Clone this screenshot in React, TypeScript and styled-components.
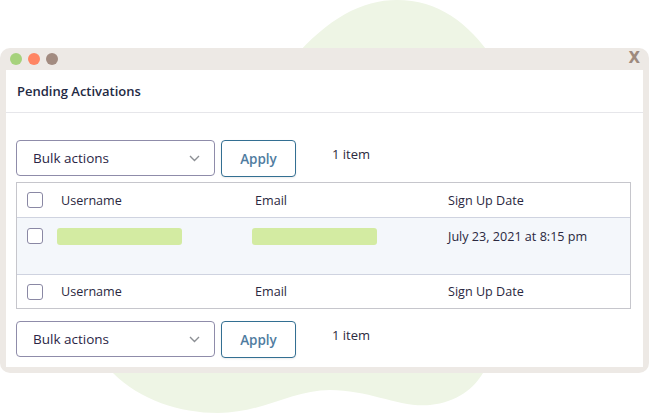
import React from "react";
import styled, { createGlobalStyle } from "styled-components";

const Global = createGlobalStyle`
  html, body { margin: 0; padding: 0; background: #ffffff; }
  body { font-family: "Open Sans", "Noto Sans", sans-serif; color: #2c3338; }
  * { box-sizing: border-box; }
`;

const Stage = styled.div`
  position: relative;
  width: 649px;
  height: 415px;
  overflow: hidden;
  padding-top: 48px;
`;

const Blob = styled.svg`
  position: absolute;
  left: 0;
  top: 0;
  z-index: 0;
`;

const Window = styled.div`
  position: relative;
  z-index: 1;
  width: 649px;
  background: #ede9e5;
  border-radius: 10px;
  padding: 0 6px 6px;
  display: flex;
  flex-direction: column;
`;

const TitleBar = styled.div`
  height: 22px;
  display: flex;
  align-items: center;
  gap: 6px;
  padding-left: 4px;
`;

const Dot = styled.span<{ $c: string }>`
  width: 12px;
  height: 12px;
  border-radius: 50%;
  background: ${(p) => p.$c};
`;

const Close = styled.span`
  margin-left: auto;
  margin-right: 3px;
  font-family: "DejaVu Sans", sans-serif;
  font-weight: 700;
  font-size: 15px;
  line-height: 1;
  color: #9e8a7e;
  padding-bottom: 1px;
`;

const Panel = styled.div`
  background: #ffffff;
  height: 297px;
  display: flex;
  flex-direction: column;
`;

const PanelHeader = styled.div`
  height: 43px;
  border-bottom: 1px solid #e6e6ea;
  display: flex;
  align-items: center;
  padding-left: 11px;
  font-size: 13px;
  font-weight: 600;
  color: #1f2a44;
`;

const Body = styled.div`
  padding: 27px 11px 0 10px;
  display: flex;
  flex-direction: column;
`;

const Toolbar = styled.div<{ $mt: number }>`
  display: flex;
  align-items: flex-start;
  gap: 6px;
  margin-top: ${(p) => p.$mt}px;
`;

const Select = styled.div`
  width: 199px;
  height: 36px;
  border: 1px solid #8f8caa;
  border-radius: 4px;
  display: flex;
  align-items: center;
  padding: 0 14px 0 16px;
  font-size: 13.5px;
  color: #2a2546;
`;

const Chevron = styled.svg`
  margin-left: auto;
`;

const ApplyButton = styled.button`
  width: 75px;
  height: 37px;
  border: 1px solid #336f92;
  border-radius: 4px;
  background: #ffffff;
  font-family: "Open Sans", "Noto Sans", sans-serif;
  font-weight: 600;
  font-size: 13.5px;
  color: #4f7ca0;
  box-shadow: 0 1px 2px rgba(0, 0, 0, 0.08);
  padding: 1px 0 0;
`;

const Count = styled.span`
  margin-left: 30px;
  margin-top: 5px;
  font-size: 13px;
  color: #2c2a40;
`;

const Table = styled.div`
  margin-top: 5px;
  width: 615px;
  border: 1px solid #c6c6cc;
  display: flex;
  flex-direction: column;
`;

const Row = styled.div<{ $h: number; $bg?: string; $top?: boolean }>`
  display: grid;
  grid-template-columns: 40px 194px 193px 1fr;
  height: ${(p) => p.$h}px;
  background: ${(p) => p.$bg || "#ffffff"};
  border-top: ${(p) => (p.$top ? "1px solid #cfd3e0" : "none")};
  align-items: ${(p) => (p.$bg ? "start" : "center")};
  padding-top: ${(p) => (p.$bg ? "10px" : "0")};
`;

const CheckCell = styled.div`
  padding-left: 10px;
  display: flex;
`;

const Checkbox = styled.span`
  width: 16px;
  height: 16px;
  border: 1px solid #8a88a4;
  border-radius: 3px;
  background: #ffffff;
`;

const Cell = styled.div`
  padding-left: 4px;
  font-size: 12.6px;
  color: #2a2840;
  white-space: nowrap;
`;

const Bar = styled.div<{ $shift: number }>`
  width: 125px;
  height: 17px;
  border-radius: 3px;
  background: #d3eba2;
  margin-left: ${(p) => p.$shift}px;
`;

const BulkRow = () => (
  <>
    <Select>
      Bulk actions
      <Chevron width="11" height="7" viewBox="0 0 11 7">
        <path d="M1 1l4.5 4.5L10 1" fill="none" stroke="#8c8f94" strokeWidth="1.4" />
      </Chevron>
    </Select>
    <ApplyButton>Apply</ApplyButton>
    <Count>1 item</Count>
  </>
);

const HeadCells = () => (
  <>
    <CheckCell>
      <Checkbox />
    </CheckCell>
    <Cell>Username</Cell>
    <Cell>Email</Cell>
    <Cell>Sign Up Date</Cell>
  </>
);

export default function App() {
  return (
    <Stage>
      <Global />
      <Blob width="649" height="415" viewBox="0 0 649 415">
        <path
          d="M292 60 C328 18 362 0 397 0 C438 0 468 22 494 60 L483 373 C474 388 458 402 430 405 C400 408 370 390 330 390 C292 390 262 413 218 413 C180 413 140 400 113 373 Z"
          fill="#eef5e5"
        />
      </Blob>
      <Window>
        <TitleBar>
          <Dot $c="#a6d27c" />
          <Dot $c="#ff8563" />
          <Dot $c="#a28b80" />
          <Close>X</Close>
        </TitleBar>
        <Panel>
          <PanelHeader>Pending Activations</PanelHeader>
          <Body>
            <Toolbar $mt={0}>
              <BulkRow />
            </Toolbar>
            <Table>
              <Row $h={34}>
                <HeadCells />
              </Row>
              <Row $h={57} $bg="#f4f7fb" $top>
                <CheckCell>
                  <Checkbox />
                </CheckCell>
                <div>
                  <Bar $shift={0} />
                </div>
                <div>
                  <Bar $shift={1} />
                </div>
                <Cell>July 23, 2021 at 8:15 pm</Cell>
              </Row>
              <Row $h={34} $top>
                <HeadCells />
              </Row>
            </Table>
            <Toolbar $mt={12}>
              <BulkRow />
            </Toolbar>
          </Body>
        </Panel>
      </Window>
    </Stage>
  );
}
